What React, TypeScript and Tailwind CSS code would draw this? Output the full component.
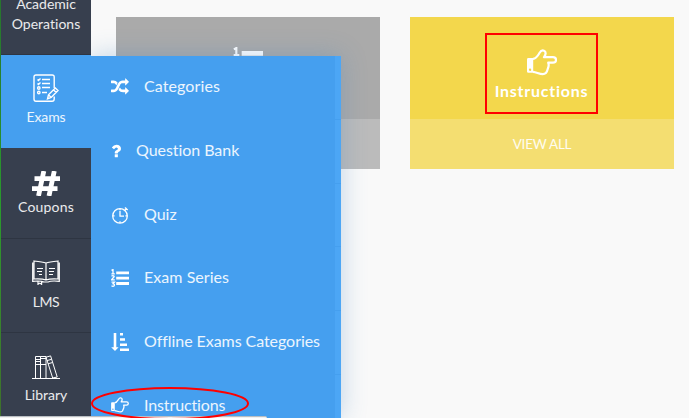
import React from "react";

function Glyph({ name, className }: { name: string; className: string }) {
  if (name === "random")
    return (
      <svg viewBox="0 0 1792 1792" className={className} fill="currentColor">
        <path d="M666 481q-60 92-137 273-22-45-37-72.5t-40.5-63.5-51-56.5-63-35-81.5-14.5h-224q-14 0-23-9t-9-23v-192q0-14 9-23t23-9h224q250 0 410 225zm1126 799q0 14-9 23l-320 320q-9 9-23 9-13 0-22.5-9.5t-9.5-22.5v-192q-32 0-85 .5t-81 1-73-1-71-5-64-10.5-63-18.5-58-28.5-59-40-55-53.5-56-69.5q59-93 136-273 22 45 37 72.5t40.5 63.5 51 56.5 63 35 81.5 14.5h256v-192q0-14 9-23t23-9q12 0 24 10l319 319q9 9 9 23zm0-896q0 14-9 23l-320 320q-9 9-23 9-13 0-22.5-9.5t-9.5-22.5v-192h-256q-48 0-87 15t-69 45-51 61.5-45 77.5q-32 62-78 171-29 66-49.5 111t-54 105-64 100-74 83-90 68.5-106.5 42-128 16.5h-224q-14 0-23-9t-9-23v-192q0-14 9-23t23-9h224q48 0 87-15t69-45 51-61.5 45-77.5q32-62 78-171 29-66 49.5-111t54-105 64-100 74-83 90-68.5 106.5-42 128-16.5h256v-192q0-14 9-23t23-9q12 0 24 10l319 319q9 9 9 23z" />
      </svg>
    );
  if (name === "question")
    return (
      <svg viewBox="384 0 1024 1792" className={className} fill="currentColor">
        <path d="M1088 1256v240q0 16-12 28t-28 12h-240q-16 0-28-12t-12-28v-240q0-16 12-28t28-12h240q16 0 28 12t12 28zm316-600q0 54-15.5 101t-35 76.5-55 59.5-57.5 43.5-61 35.5q-41 23-68.5 65t-27.5 67q0 17-12 32.5t-28 15.5h-240q-15 0-25.5-18.5t-10.5-37.5v-45q0-83 65-156.5t143-108.5q59-27 84-56t25-76q0-42-46.5-74t-107.5-32q-65 0-108 29-35 25-107 115-13 16-31 16-12 0-25-8l-164-125q-13-10-15.5-25t5.5-28q160-266 464-266 80 0 161 31t146 83 106 127.5 41 158.5z" />
      </svg>
    );
  if (name === "clock")
    return (
      <svg viewBox="0 0 18 18" className={className} fill="none" stroke="currentColor" strokeWidth="1.3">
        <circle cx="9" cy="9.9" r="7.3" />
        <path d="M9 5v5.200h4M9 2.500v1.700M9 15.200v1.800M1.800 9.900h1.800M14.400 9.900h1.800M13.300 4.800l2.500-2.500M13.900 1.400l2.800 2.600" />
      </svg>
    );
  if (name === "list")
    return (
      <svg viewBox="0 0 18 18" className={className} fill="none" stroke="currentColor">
        <path d="M5.2 3.8h12.8M5.2 9.200h12.8M5.2 14.5h12.8" strokeWidth="2.8" />
        <path d="M.5 1.400L2 .6v4M.4 4.900h3.400M.5 7.200q1.300-1 2.500-.1c.9 1-2.200 2.200-2.400 3.700h3.200M.5 13.200h2.900l-1.400 1.500c2.200.2 1.600 2.600 0 2.600q-.8 0-1.500-.5" strokeWidth="1.300" />
      </svg>
    );
  if (name === "sort")
    return (
      <svg viewBox="0 0 18 18" className={className} fill="currentColor">
        <path d="M2.700 0h2.600v14.200h2.300L4 18 .2 14.200h2.500zM9 0h3v2.600H9zM9 5.200h5v2.600H9zM9 10.400h7V13H9zM9 15.400h9V18H9z" />
      </svg>
    );
  return (
    <svg viewBox="0 0 30 27" className={className} fill="none" stroke="currentColor" strokeWidth="2.200" strokeLinejoin="round">
      <path fillRule="evenodd" fill="currentColor" stroke="none" d="M1.400 9H6.200v14.800H1.400Q0 23.800 0 22.400V10.400Q0 9 1.400 9ZM3 19.500a1.200 1.200 0 1 0 .1 2.400a1.200 1.200 0 1 0-.1-2.400Z" />
      <path d="M6 9.900C9.500 9.600 11 6.500 12.600 3.800C13.900 1.600 15.500 1.100 17 1.700C19.400 2.700 18.900 5.800 17 8.200H26C30 8.200 30 13.700 26 13.700H21.200C22.200 16 21.600 18 20.800 19.800C20 23.500 18.800 25.200 15.800 25.200C12.200 25.200 9.500 23.200 6 22.900" />
    </svg>
  );
}

function ChecklistIcon() {
  return (
    <svg viewBox="0 0 26 29" className="h-[29px] w-[26px]" fill="none" stroke="currentColor" strokeWidth="1.4">
      <path d="M21.200 14V3Q21.200 1 19.200 1H3Q1 1 1 3V25Q1 27.200 3 27.200H19Q21.200 27.200 21.200 25V22.500" />
      <path d="M9 5.500h8M9 9.500h8M9 13.500h8M9 18.500h5M4.500 5.400l1 1 2-2M4.500 9.400l1 1 2-2" />
      <circle cx="5.800" cy="14" r="1.200" />
      <circle cx="5.800" cy="18.500" r="1.200" />
      <path d="M14.500 24.800l1-4 6.800-6.900 2.700 2.700-6.800 6.900zM15.500 20.800l2.700 2.700M20.500 15.700l2.700 2.700" />
    </svg>
  );
}

function BookIcon() {
  return (
    <svg viewBox="0 0 28 25" className="h-[25px] w-7" fill="none" stroke="currentColor" strokeWidth="1.200">
      <path d="M14 3Q11 1.800 2 1V19Q10 18.500 14 20Q18 18.500 26 19V1Q17 1.800 14 3V20M.7 2.500V21.300Q9 20.500 12 22h4Q19 20.500 27.300 21.300V2.500M5 8.500h6M5 11.500h5M7 14.500h3M17 8.500h6M17 11.500h5M17 14.500h4M6 21.300v3l1.800-1.200 1.800 1.200v-3" />
    </svg>
  );
}

function ShelfIcon() {
  return (
    <svg viewBox="0 0 28 24" className="h-6 w-7" fill="none" stroke="currentColor" strokeWidth="1">
      <path d="M0 23.500h28M3.500 23V1.500h5V23M8.500 23V1.500h5.500V23M3.500 4.500h5M3.500 6.500h5M3.500 9.500h5M8.500 3.500H14M8.500 9.500H14M14 2.200l4.600-1.300L25.200 22l-4.500 1zM15 5.600l4.600-1.300M16 8.800l4.600-1.300" />
    </svg>
  );
}

const menu = [
  { icon: "random", label: "Categories", size: "h-[18px] w-[18px]", track: "tracking-[0.1px]" },
  { icon: "question", label: "Question Bank", size: "h-[18px] w-[10px]", track: "tracking-[-0.05px]" },
  { icon: "clock", label: "Quiz", size: "h-[18px] w-[18px]", track: "tracking-[0px]" },
  { icon: "list", label: "Exam Series", size: "h-[18px] w-[18px]", track: "tracking-[0.05px]" },
  { icon: "sort", label: "Offline Exams Categories", size: "h-[18px] w-[18px]", track: "tracking-[-0.06px]" },
  { icon: "hand", label: "Instructions", size: "h-[16px] w-[18px]", track: "tracking-[-0.13px]" },
];

export default function App() {
  return (
    <div className="relative flex h-[418px] w-[689px] overflow-hidden bg-[#f9f9f9] font-['Lato',sans-serif] text-white">
      <div className="w-px shrink-0 bg-gradient-to-b from-[#27752d] via-[#299b2c] to-[#3e702b]" />
      <aside className="relative z-20 flex w-[90px] shrink-0 flex-col bg-[#373f4e] text-center text-[14px] leading-5">
        <div className="flex h-[55px] flex-col justify-start border-b border-[#2e3542] text-white/90">
          <span className="-mt-1.5">Academic</span>
          <span className="tracking-[0.02px]">Operations</span>
        </div>
        <div className="flex h-[93px] flex-col items-center bg-[#459fef] pt-[19px]">
          <ChecklistIcon />
          <span className="mt-1 tracking-[-0.1px] text-white/90">Exams</span>
        </div>
        <div className="flex h-[91px] flex-col items-center border-b border-[#2e3542] pt-[23px]">
          <svg viewBox="0 0 28 25" className="h-[25px] w-7" fill="none" stroke="currentColor" strokeWidth="4.800">
            <path d="M11.800 0L6.500 25M22.300 0L17 25M2.500 7.700H28M0 17.700h25.500" />
          </svg>
          <span className="mt-px tracking-[0.2px] text-white/90">Coupons</span>
        </div>
        <div className="flex h-[94px] flex-col items-center border-b border-[#2e3542] pt-[21px]">
          <BookIcon />
          <span className="mt-[7px] tracking-[-0.4px] text-white/90">LMS</span>
        </div>
        <div className="flex flex-1 flex-col items-center pt-[22px]">
          <ShelfIcon />
          <span className="mt-1.5 text-white/90">Library</span>
        </div>
      </aside>

      <main className="flex flex-1 items-start gap-[30px] pt-[17px] pl-[25px]">
        <section className="h-[152px] w-[264px] bg-[#aaaaaa]">
          <div className="flex h-[102px] flex-col items-center pt-[30px]">
            <Glyph name="list" className="h-[30px] w-[30px]" />
          </div>
          <div className="h-[50px] bg-[#bbbbbb]" />
        </section>
        <section className="h-[152px] w-[264px] bg-[#f3d74c] text-center">
          <div className="flex h-[102px] pt-4 pl-[75px]">
            <div className="flex h-[81px] w-[113px] flex-col items-center border-2 border-[#ff0000] pt-[14px]">
              <Glyph name="hand" className="h-[27px] w-[30px]" />
              <span className="mt-[3px] text-[16px] leading-6 font-bold tracking-[0.75px]">Instructions</span>
            </div>
          </div>
          <div className="flex h-[50px] items-center justify-center bg-[#f4de71] text-[13.5px] tracking-[-0.25px] text-white/90">VIEW ALL</div>
        </section>
      </main>

      <nav className="absolute top-[56px] left-[91px] z-10 h-[362px] w-[250px] bg-[#459fef] shadow-[0_0_24px_rgba(69,130,190,0.32)]">
        {menu.map((item) => (
          <div key={item.label} className="flex h-[63.8px] items-start">
            <div className="flex h-full flex-1 items-start gap-[15px] pt-[19px] pl-5">
              <Glyph name={item.icon} className={"mt-[3px] shrink-0 " + item.size} />
              <span className={"-mt-px text-[16px] leading-6 whitespace-nowrap text-white/90 " + item.track}>{item.label}</span>
            </div>
            <div className="h-full w-1.5 border-b border-[#459fef] bg-[#4ca6f5]" />
          </div>
        ))}
      </nav>
      <div className="absolute bottom-0 left-0 z-20 h-0.5 w-[267px] rounded-tr-[3px] border-t border-[#b9bec3] bg-[#f2f1f0]" />
      <svg viewBox="0 0 160 34" className="absolute top-[386px] left-[90px] z-30 h-[34px] w-40" fill="none">
        <ellipse cx="80" cy="17.500" rx="78" ry="15.500" stroke="#ff0000" strokeWidth="2" />
      </svg>
    </div>
  );
}
